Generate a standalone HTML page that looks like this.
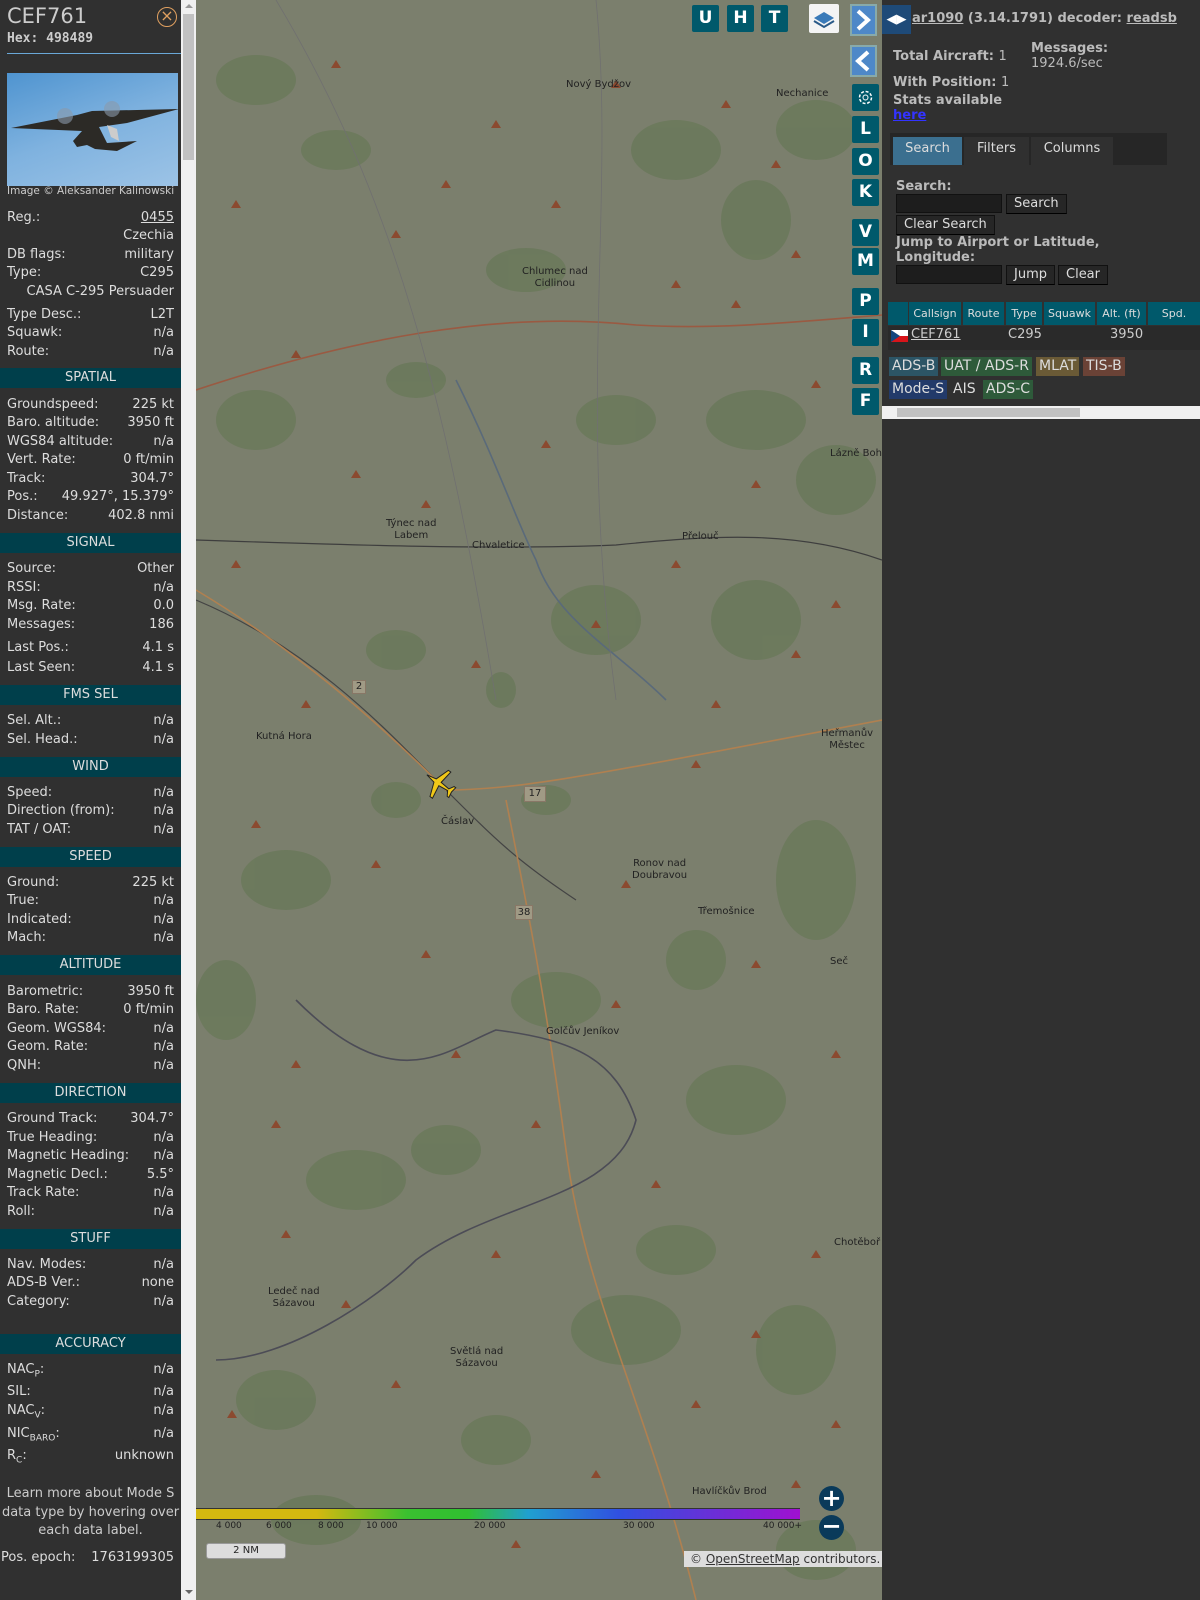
<!DOCTYPE html>
<html><head><meta charset="utf-8"><style>
*{margin:0;padding:0;box-sizing:border-box}
body{width:1200px;height:1600px;overflow:hidden;background:#7a7e6c;font-family:"DejaVu Sans","Liberation Sans",sans-serif;position:relative}
#side{position:absolute;left:0;top:0;width:181px;height:1600px;background:#303030;color:#ddd;font-size:13px}
#sb{position:absolute;left:181px;top:0;width:15px;height:1600px;background:#f0f0f0}
#sb .th{position:absolute;left:2px;top:14px;width:11px;height:146px;background:#c1c1c1}
.r{position:absolute;left:7px;width:167px;height:18px;line-height:18px;white-space:nowrap}
.r b{font-weight:normal;position:absolute;right:0;top:0}
.h{position:absolute;left:0;width:181px;height:20px;line-height:20px;background:#003f4b;text-align:center;color:#ddd;font-size:13px}
#map{position:absolute;left:196px;top:0;width:686px;height:1600px;overflow:hidden;background:#7b7f6d}
.btn{position:absolute;width:27px;height:27px;background:#00596b;color:#fff;font-weight:bold;font-size:17px;text-align:center;line-height:27px;border-radius:2px}
.t{position:absolute;font-size:10px;color:#222;text-align:center;line-height:12px}
#right{position:absolute;left:882px;top:0;width:318px;height:1600px;background:#303030;color:#ddd;font-size:13px}
.bb{position:absolute;font-weight:bold;color:#bbb;font-size:13px}
.inp{position:absolute;background:#1d1d1d;border:1px solid #111;height:19px;width:106px}
.b2{position:absolute;background:#262626;border:1px solid #111;border-bottom-color:#000;color:#ddd;font-size:13px;height:20px;line-height:18px;padding:0 7px}
.th2{position:absolute;top:302px;height:23px;background:#00596b;color:#ddd;font-size:11px;line-height:23px;text-align:center}
.tag{position:absolute;height:19px;line-height:19px;font-size:14px;padding:0 3px;color:#ddd}
</style></head><body>
<div id="side">
<div style="position:absolute;left:7px;top:4px;font-size:21px;color:#ccc">CEF761</div>
<div style="position:absolute;left:7px;top:31px;font-size:13px;font-weight:bold;font-family:'DejaVu Sans Mono',monospace;color:#ccc">Hex: 498489</div>
<div style="position:absolute;left:157px;top:7px;width:20px;height:20px;border:1.5px solid #e0a060;border-radius:50%;color:#e0a060;font-size:16px;line-height:16px;text-align:center">×</div>
<div style="position:absolute;left:7px;top:53px;width:174px;height:1px;background:#6aa8d8"></div>
<div style="position:absolute;left:7px;top:73px;width:171px;height:113px;background:linear-gradient(160deg,#4f94d0,#7fb2df 50%,#9cc3e6)">
<svg width="171" height="113" viewBox="0 0 171 113"><path d="M4 55 L70 42 L85 38 L172 36 L120 50 L92 54 L100 70 L130 68 L110 78 L88 76 L80 72 L70 74 L66 68 L75 58 Z" fill="#2c2a26"/><circle cx="58" cy="43" r="8" fill="#8a9aaa" opacity=".6"/><circle cx="105" cy="36" r="8" fill="#8a9aaa" opacity=".6"/><path d="M100 52 L110 56 L112 68 L104 64Z" fill="#ccc"/></svg></div>
<div style="position:absolute;left:7px;top:185px;font-size:10.5px;color:#ccc">Image © Aleksander Kalinowski</div>
<div class="r" style="top:209px">Reg.:<b style="text-decoration:underline">0455</b></div>
<div class="r" style="top:227px"><b>Czechia</b></div>
<div class="r" style="top:246px">DB flags:<b>military</b></div>
<div class="r" style="top:264px">Type:<b>C295</b></div>
<div class="r" style="top:283px"><b>CASA C-295 Persuader</b></div>
<div class="r" style="top:306px">Type Desc.:<b>L2T</b></div>
<div class="r" style="top:324px">Squawk:<b>n/a</b></div>
<div class="r" style="top:343px">Route:<b>n/a</b></div>
<div class="h" style="top:368px">SPATIAL</div>
<div class="r" style="top:396px">Groundspeed:<b>225 kt</b></div>
<div class="r" style="top:414px">Baro. altitude:<b>3950 ft</b></div>
<div class="r" style="top:433px">WGS84 altitude:<b>n/a</b></div>
<div class="r" style="top:451px">Vert. Rate:<b>0 ft/min</b></div>
<div class="r" style="top:470px">Track:<b>304.7°</b></div>
<div class="r" style="top:488px">Pos.:<b>49.927°, 15.379°</b></div>
<div class="r" style="top:507px">Distance:<b>402.8 nmi</b></div>
<div class="h" style="top:533px">SIGNAL</div>
<div class="r" style="top:560px">Source:<b>Other</b></div>
<div class="r" style="top:579px">RSSI:<b>n/a</b></div>
<div class="r" style="top:597px">Msg. Rate:<b>0.0</b></div>
<div class="r" style="top:616px">Messages:<b>186</b></div>
<div class="r" style="top:639px">Last Pos.:<b>4.1 s</b></div>
<div class="r" style="top:659px">Last Seen:<b>4.1 s</b></div>
<div class="h" style="top:685px">FMS SEL</div>
<div class="r" style="top:712px">Sel. Alt.:<b>n/a</b></div>
<div class="r" style="top:731px">Sel. Head.:<b>n/a</b></div>
<div class="h" style="top:757px">WIND</div>
<div class="r" style="top:784px">Speed:<b>n/a</b></div>
<div class="r" style="top:802px">Direction (from):<b>n/a</b></div>
<div class="r" style="top:821px">TAT / OAT:<b>n/a</b></div>
<div class="h" style="top:847px">SPEED</div>
<div class="r" style="top:874px">Ground:<b>225 kt</b></div>
<div class="r" style="top:892px">True:<b>n/a</b></div>
<div class="r" style="top:911px">Indicated:<b>n/a</b></div>
<div class="r" style="top:929px">Mach:<b>n/a</b></div>
<div class="h" style="top:955px">ALTITUDE</div>
<div class="r" style="top:983px">Barometric:<b>3950 ft</b></div>
<div class="r" style="top:1001px">Baro. Rate:<b>0 ft/min</b></div>
<div class="r" style="top:1020px">Geom. WGS84:<b>n/a</b></div>
<div class="r" style="top:1038px">Geom. Rate:<b>n/a</b></div>
<div class="r" style="top:1057px">QNH:<b>n/a</b></div>
<div class="h" style="top:1083px">DIRECTION</div>
<div class="r" style="top:1110px">Ground Track:<b>304.7°</b></div>
<div class="r" style="top:1129px">True Heading:<b>n/a</b></div>
<div class="r" style="top:1147px">Magnetic Heading:<b>n/a</b></div>
<div class="r" style="top:1166px">Magnetic Decl.:<b>5.5°</b></div>
<div class="r" style="top:1184px">Track Rate:<b>n/a</b></div>
<div class="r" style="top:1203px">Roll:<b>n/a</b></div>
<div class="h" style="top:1229px">STUFF</div>
<div class="r" style="top:1256px">Nav. Modes:<b>n/a</b></div>
<div class="r" style="top:1274px">ADS-B Ver.:<b>none</b></div>
<div class="r" style="top:1293px">Category:<b>n/a</b></div>
<div class="h" style="top:1334px">ACCURACY</div>
<div class="r" style="top:1361px">NAC<sub style="font-size:9px">P</sub>:<b>n/a</b></div>
<div class="r" style="top:1383px">SIL:<b>n/a</b></div>
<div class="r" style="top:1402px">NAC<sub style="font-size:9px">V</sub>:<b>n/a</b></div>
<div class="r" style="top:1425px">NIC<sub style="font-size:9px">BARO</sub>:<b>n/a</b></div>
<div class="r" style="top:1447px">R<sub style="font-size:9px">C</sub>:<b>unknown</b></div>
<div style="position:absolute;left:0;width:181px;top:1485px;text-align:center;line-height:18.5px;color:#ccc">Learn more about Mode S data type by hovering over each data label.</div>
<div class="r" style="top:1549px;left:1px;width:173px">Pos. epoch:<b>1763199305</b></div>
</div>
<div id="sb"><div class="th"></div><div style="position:absolute;left:4px;top:4px;border:4px solid transparent;border-bottom-color:#999;border-top:0"></div><div style="position:absolute;left:4px;top:1590px;border:4px solid transparent;border-top-color:#666;border-bottom:0"></div></div>

<div id="map">
<svg width="686" height="1600" style="position:absolute;left:0;top:0">
<g fill="#687858" opacity=".75">
<ellipse cx="60" cy="80" rx="40" ry="25"/><ellipse cx="140" cy="150" rx="35" ry="20"/><ellipse cx="330" cy="270" rx="40" ry="22"/><ellipse cx="480" cy="150" rx="45" ry="30"/><ellipse cx="560" cy="220" rx="35" ry="40"/><ellipse cx="620" cy="130" rx="40" ry="30"/><ellipse cx="420" cy="420" rx="40" ry="25"/><ellipse cx="560" cy="420" rx="50" ry="30"/><ellipse cx="640" cy="480" rx="40" ry="35"/><ellipse cx="60" cy="420" rx="40" ry="30"/><ellipse cx="220" cy="380" rx="30" ry="18"/><ellipse cx="400" cy="620" rx="45" ry="35"/><ellipse cx="560" cy="620" rx="45" ry="40"/><ellipse cx="620" cy="880" rx="40" ry="60"/><ellipse cx="90" cy="880" rx="45" ry="30"/><ellipse cx="360" cy="1000" rx="45" ry="28"/><ellipse cx="540" cy="1100" rx="50" ry="35"/><ellipse cx="160" cy="1180" rx="50" ry="30"/><ellipse cx="430" cy="1330" rx="55" ry="35"/><ellipse cx="600" cy="1350" rx="40" ry="45"/><ellipse cx="80" cy="1400" rx="40" ry="30"/><ellipse cx="300" cy="1440" rx="35" ry="25"/><ellipse cx="200" cy="650" rx="30" ry="20"/><ellipse cx="305" cy="690" rx="15" ry="18"/><ellipse cx="30" cy="1000" rx="30" ry="40"/><ellipse cx="250" cy="1150" rx="35" ry="25"/><ellipse cx="480" cy="1250" rx="40" ry="25"/><ellipse cx="120" cy="1520" rx="45" ry="25"/><ellipse cx="620" cy="1550" rx="40" ry="30"/><ellipse cx="200" cy="800" rx="25" ry="18"/><ellipse cx="500" cy="960" rx="30" ry="30"/><ellipse cx="350" cy="800" rx="25" ry="15"/></g>
<g fill="none" stroke-width="1.6">
<path d="M0 390 C150 340 300 310 440 325 C520 330 600 322 686 315" stroke="#9a5a42"/>
<path d="M0 540 C150 545 300 550 420 545 C520 535 600 530 686 560" stroke="#3e3e3e" stroke-width="1.2"/>
<path d="M0 600 C120 650 200 740 250 790 C300 840 320 860 380 900" stroke="#444" stroke-width="1.2"/>
<path d="M0 590 C100 650 180 720 250 790 C330 790 420 770 686 720" stroke="#b08050"/>
<path d="M310 800 C330 900 350 1000 370 1150 C390 1300 450 1400 500 1600" stroke="#b08050"/>
<path d="M100 1000 C200 1100 250 1050 300 1030 C380 1040 420 1060 440 1120 C420 1200 300 1200 220 1260 C180 1300 90 1360 20 1360" stroke="#4c4c56"/>
<path d="M260 380 C300 460 320 520 340 560 C360 620 420 650 470 700" stroke="#5a6a7a"/>
<path d="M80 0 C200 200 250 400 300 700 M400 0 C420 200 380 400 420 700" stroke="#707070" stroke-width=".8"/>
</g>
<g fill="#8b4a30">
<path d="M140 60l5 8h-10z M300 120l5 8h-10z M420 80l5 8h-10z M530 100l5 8h-10z M200 230l5 8h-10z M480 280l5 8h-10z M600 250l5 8h-10z M100 350l5 8h-10z M350 440l5 8h-10z M560 480l5 8h-10z M230 500l5 8h-10z M400 620l5 8h-10z M640 600l5 8h-10z M110 700l5 8h-10z M500 760l5 8h-10z M180 860l5 8h-10z M430 880l5 8h-10z M560 960l5 8h-10z M260 1050l5 8h-10z M80 1120l5 8h-10z M460 1180l5 8h-10z M300 1250l5 8h-10z M620 1250l5 8h-10z M150 1300l5 8h-10z M500 1400l5 8h-10z M36 1410l5 8h-10z M400 1470l5 8h-10z M600 1480l5 8h-10z M540 300l5 8h-10z M580 160l5 8h-10z M40 200l5 8h-10z M250 180l5 8h-10z M360 200l5 8h-10z M620 380l5 8h-10z M160 470l5 8h-10z M480 560l5 8h-10z M600 650l5 8h-10z M40 560l5 8h-10z M280 660l5 8h-10z M520 700l5 8h-10z M60 820l5 8h-10z M230 950l5 8h-10z M420 1000l5 8h-10z M640 1050l5 8h-10z M100 1060l5 8h-10z M340 1120l5 8h-10z M200 1380l5 8h-10z M560 1330l5 8h-10z M640 1420l5 8h-10z M320 1540l5 8h-10z M90 1230l5 8h-10z"/></g>
</svg>
<div class="t" style="left:370px;top:79px">Nový Bydžov</div>
<div class="t" style="left:580px;top:88px">Nechanice</div>
<div class="t" style="left:326px;top:266px">Chlumec nad<br>Cidlinou</div>
<div class="t" style="left:190px;top:518px">Týnec nad<br>Labem</div>
<div class="t" style="left:276px;top:540px">Chvaletice</div>
<div class="t" style="left:486px;top:531px">Přelouč</div>
<div class="t" style="left:634px;top:448px">Lázně Boh</div>
<div class="t" style="left:60px;top:731px">Kutná Hora</div>
<div class="t" style="left:625px;top:728px">Heřmanův<br>Městec</div>
<div class="t" style="left:245px;top:816px">Čáslav</div>
<div class="t" style="left:436px;top:858px">Ronov nad<br>Doubravou</div>
<div class="t" style="left:502px;top:906px">Třemošnice</div>
<div class="t" style="left:634px;top:956px">Seč</div>
<div class="t" style="left:350px;top:1026px">Golčův Jeníkov</div>
<div class="t" style="left:638px;top:1237px">Chotěboř</div>
<div class="t" style="left:72px;top:1286px">Ledeč nad<br>Sázavou</div>
<div class="t" style="left:254px;top:1346px">Světlá nad<br>Sázavou</div>
<div class="t" style="left:496px;top:1486px">Havlíčkův Brod</div>
<div style="position:absolute;left:328px;top:786px;width:22px;height:16px;border:1px solid #876;background:#a09a85;font-size:10px;text-align:center;line-height:14px;color:#222">17</div>
<div style="position:absolute;left:319px;top:905px;width:18px;height:15px;border:1px solid #876;background:#a09a85;font-size:10px;text-align:center;line-height:13px;color:#222">38</div>
<div style="position:absolute;left:156px;top:680px;width:14px;height:14px;border:1px solid #876;background:#a09a85;font-size:10px;text-align:center;line-height:12px;color:#222">2</div>
<svg style="position:absolute;left:226px;top:766px" width="36" height="36" viewBox="0 0 36 36"><g transform="rotate(-55 18 18)"><path d="M18 2 L20 12 L34 17 L34 20 L20 18 L19 28 L24 31 L24 33 L18 32 L12 33 L12 31 L17 28 L16 18 L2 20 L2 17 L16 12Z" fill="#f0c818" stroke="#222" stroke-width="1"/></g></svg>
<div class="btn" style="left:496px;top:5px">U</div>
<div class="btn" style="left:531px;top:5px">H</div>
<div class="btn" style="left:565px;top:5px">T</div>
<div style="position:absolute;left:613px;top:4px;width:30px;height:29px;background:#f4f4f4;border-radius:2px"><svg width="30" height="29"><path d="M5 14 L15 8 L25 14 L15 20Z" fill="#3a7ab8"/><path d="M5 17 L15 23 L25 17" stroke="#2a5a88" fill="none" stroke-width="2"/></svg></div>
<div style="position:absolute;left:654px;top:4px;width:27px;height:32px;background:#4e88c8;border:2px solid #8aa"><svg width="23" height="28"><path d="M6 5 L16 14 L6 23" stroke="#fff" stroke-width="4" fill="none"/></svg></div>
<div style="position:absolute;left:654px;top:45px;width:27px;height:32px;background:#4e88c8;border:2px solid #8aa"><svg width="23" height="28"><path d="M16 5 L6 14 L16 23" stroke="#fff" stroke-width="4" fill="none"/></svg></div>
<div class="btn" style="left:656px;top:84px"><svg width="27" height="27"><circle cx="13.5" cy="13.5" r="6" stroke="#fff" fill="none" stroke-width="1.5" stroke-dasharray="3 1.7"/><circle cx="13.5" cy="13.5" r="2.5" stroke="#fff" fill="none"/></svg></div>
<div class="btn" style="left:656px;top:116px">L</div>
<div class="btn" style="left:656px;top:148px">O</div>
<div class="btn" style="left:656px;top:179px">K</div>
<div class="btn" style="left:656px;top:219px">V</div>
<div class="btn" style="left:656px;top:248px">M</div>
<div class="btn" style="left:656px;top:288px">P</div>
<div class="btn" style="left:656px;top:319px">I</div>
<div class="btn" style="left:656px;top:357px">R</div>
<div class="btn" style="left:656px;top:388px">F</div>
<div style="position:absolute;left:0;top:1508px;width:604px;height:12px;background:linear-gradient(90deg,#d4b810 0%,#d4b810 20%,#3ac030 35%,#30c030 45%,#20a0d0 55%,#3050e0 70%,#a010d0 100%);border-top:1px solid #333;border-bottom:1px solid #333"></div>
<div style="position:absolute;left:0;top:1521px;width:620px;font-size:9px;color:#222">
<span style="position:absolute;left:20px">4 000</span><span style="position:absolute;left:70px">6 000</span><span style="position:absolute;left:122px">8 000</span><span style="position:absolute;left:170px">10 000</span><span style="position:absolute;left:278px">20 000</span><span style="position:absolute;left:427px">30 000</span><span style="position:absolute;left:567px">40 000+</span></div>
<div style="position:absolute;left:10px;top:1543px;width:80px;height:16px;background:#ddd;border:1px solid #999;border-radius:3px;font-size:10px;text-align:center;line-height:14px;color:#222">2 NM</div>
<div style="position:absolute;left:623px;top:1486px;width:25px;height:25px;border-radius:50%;background:#0a3a5a;color:#fff;font-size:24px;font-weight:bold;text-align:center;line-height:24px">+</div>
<div style="position:absolute;left:623px;top:1515px;width:25px;height:25px;border-radius:50%;background:#0a3a5a;color:#fff;font-size:24px;font-weight:bold;text-align:center;line-height:22px">−</div>
<div style="position:absolute;left:488px;top:1551px;width:198px;height:16px;background:#ddd;font-size:12px;line-height:16px;color:#333;padding-left:6px">© <u>OpenStreetMap</u> contributors.</div>
</div>

<div id="right">
<div style="position:absolute;left:0;top:5px;width:29px;height:29px;background:#1e4a78;color:#fff;font-size:13px;line-height:29px;text-align:center">◀▶</div>
<div class="bb" style="left:30px;top:11px"><u>ar1090</u> (3.14.1791) decoder: <u>readsb</u></div>
<div class="bb" style="left:11px;top:49px">Total Aircraft: <span style="font-weight:normal">1</span></div>
<div class="bb" style="left:149px;top:41px">Messages:<br><span style="font-weight:normal">1924.6/sec</span></div>
<div class="bb" style="left:11px;top:75px">With Position: <span style="font-weight:normal">1</span></div>
<div class="bb" style="left:11px;top:93px;line-height:15px">Stats available<br><u style="color:#33f">here</u></div>
<div style="position:absolute;left:8px;top:133px;width:277px;height:32px;background:#262626"></div>
<div style="position:absolute;left:11px;top:137px;width:69px;height:28px;background:#3b6f8f;color:#ddd;line-height:24px;text-align:center">Search</div>
<div style="position:absolute;left:82px;top:137px;width:65px;height:28px;background:#303030;color:#ddd;line-height:24px;text-align:center">Filters</div>
<div style="position:absolute;left:149px;top:137px;width:82px;height:28px;background:#303030;color:#ddd;line-height:24px;text-align:center">Columns</div>
<div class="bb" style="left:14px;top:179px">Search:</div>
<div class="inp" style="left:14px;top:194px"></div>
<div class="b2" style="left:124px;top:194px">Search</div>
<div class="b2" style="left:14px;top:215px">Clear Search</div>
<div class="bb" style="left:14px;top:235px;line-height:15px">Jump to Airport or Latitude,<br>Longitude:</div>
<div class="inp" style="left:14px;top:265px"></div>
<div class="b2" style="left:124px;top:265px">Jump</div>
<div class="b2" style="left:176px;top:265px">Clear</div>
<div class="th2" style="left:6px;width:20px"></div>
<div class="th2" style="left:27px;width:52px">Callsign</div>
<div class="th2" style="left:81px;width:41px">Route</div>
<div class="th2" style="left:124px;width:36px">Type</div>
<div class="th2" style="left:162px;width:51px">Squawk</div>
<div class="th2" style="left:215px;width:49px">Alt. (ft)</div>
<div class="th2" style="left:266px;width:52px">Spd.</div>
<div style="position:absolute;left:6px;top:326px;width:312px;height:24px;background:#2a2a2a"></div>
<div style="position:absolute;left:9px;top:330px;width:17px;height:12px;background:linear-gradient(#fff 50%,#d7141a 50%)"><div style="width:0;height:0;border-top:6px solid transparent;border-bottom:6px solid transparent;border-left:9px solid #11457e"></div></div>
<div style="position:absolute;left:29px;top:327px;text-decoration:underline;color:#ccc">CEF761</div>
<div style="position:absolute;left:126px;top:327px;color:#ccc">C295</div>
<div style="position:absolute;left:228px;top:327px;color:#ccc">3950</div>
<div class="tag" style="left:7px;top:357px;background:#2c5566">ADS-B</div>
<div class="tag" style="left:59px;top:357px;background:#2e5a3a">UAT / ADS-R</div>
<div class="tag" style="left:154px;top:357px;background:#6a5a36">MLAT</div>
<div class="tag" style="left:201px;top:357px;background:#6a4236">TIS-B</div>
<div class="tag" style="left:7px;top:380px;background:#223a6a">Mode-S</div>
<div class="tag" style="left:68px;top:380px">AIS</div>
<div class="tag" style="left:101px;top:380px;background:#2e5a3a">ADS-C</div>
<div style="position:absolute;left:0;top:406px;width:318px;height:13px;background:#f0f0f0"><div style="position:absolute;left:15px;top:2px;width:183px;height:9px;background:#c1c1c1"></div></div>
</div>
</body></html>
